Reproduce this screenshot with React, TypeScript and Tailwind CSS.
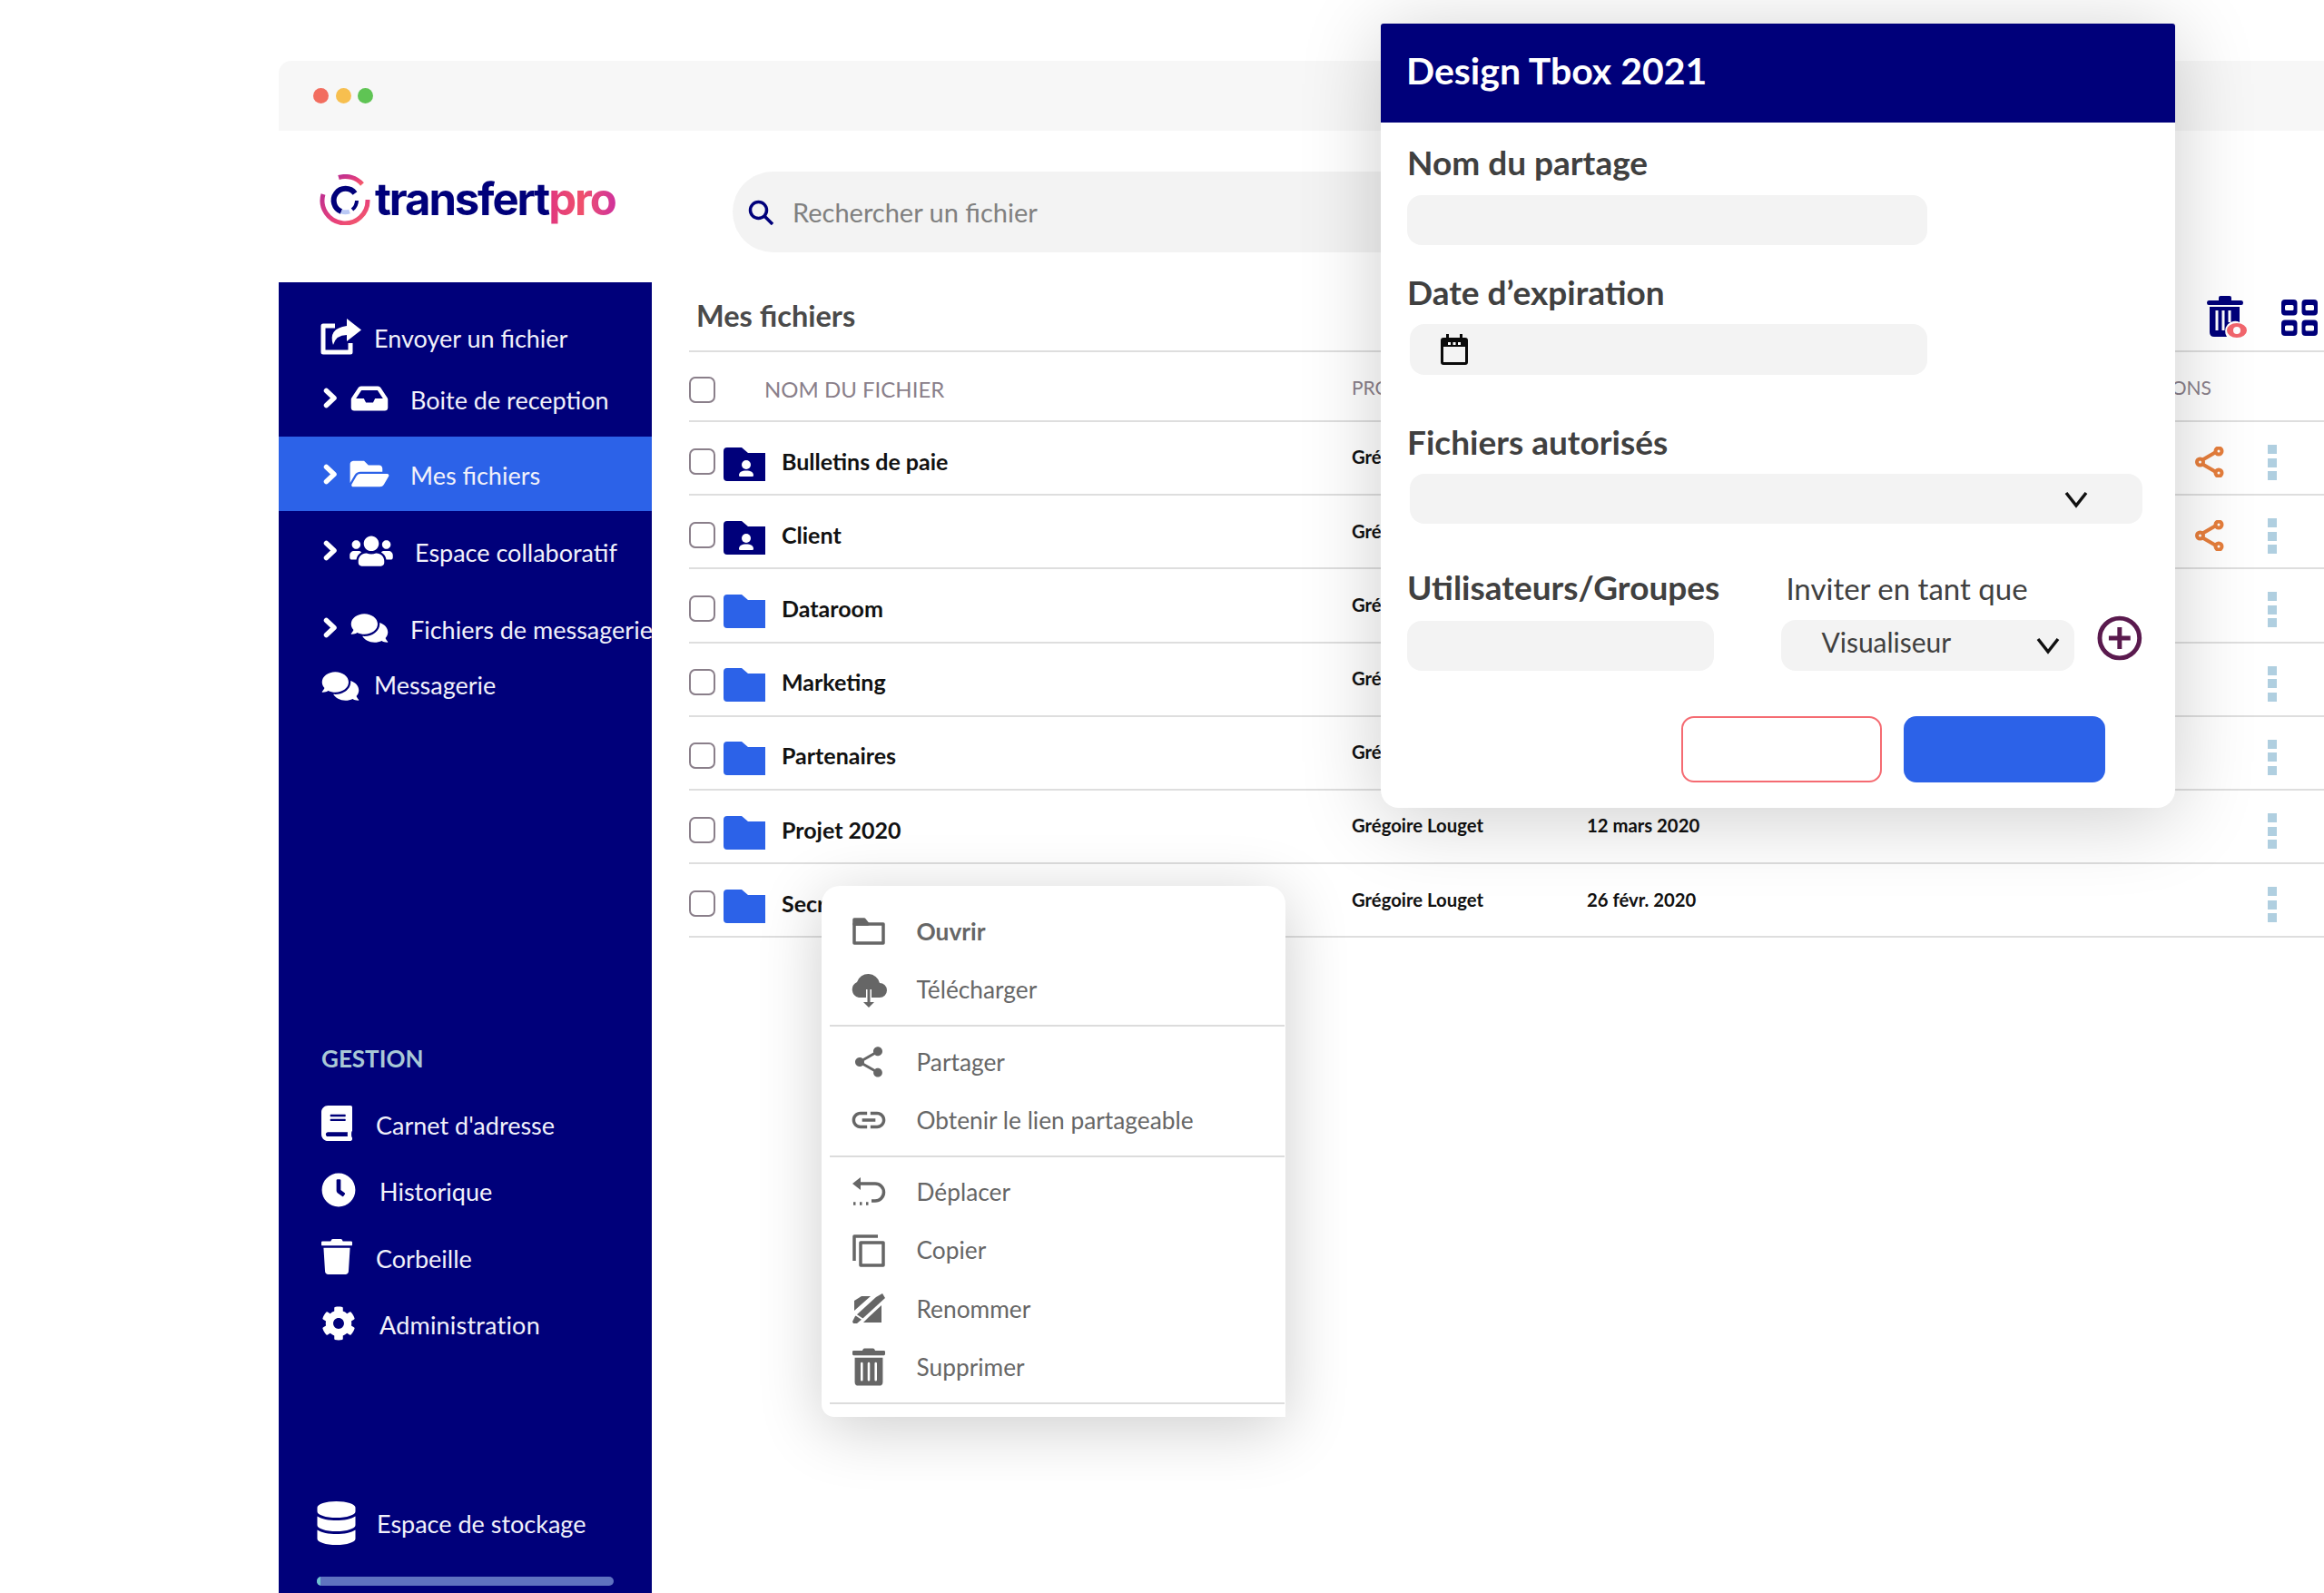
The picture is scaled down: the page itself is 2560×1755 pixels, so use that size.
import type { ReactNode } from "react";
import {
  FaBook,
  FaClock,
  FaCog,
  FaComments,
  FaDatabase,
  FaFolderOpen,
  FaInbox,
  FaTrash,
  FaTrashAlt,
  FaUsers,
} from "react-icons/fa";
import { MdLink, MdShare } from "react-icons/md";

const NAVY = "#00007a";
const BLUE = "#2c62e8";

function Logo() {
  return (
    <div className="flex items-center ml-[45px] w-[455px] mb-[16px]">
      <svg width="56" height="56" viewBox="0 0 56 56" fill="none" className="shrink-0">
        <defs>
          <linearGradient id="ring" x1="0" y1="0" x2="1" y2="1">
            <stop offset="0" stopColor="#c0308f" />
            <stop offset="0.6" stopColor="#e8407a" />
            <stop offset="1" stopColor="#f5606a" />
          </linearGradient>
        </defs>
        <path d="M21 3.5A25 25 0 0 1 47 11" stroke="url(#ring)" strokeWidth="5" />
        <path d="M53 28A25 25 0 1 1 4 22" stroke="url(#ring)" strokeWidth="5" />
        <path d="M39 21A13 13 0 1 0 24 41" stroke={NAVY} strokeWidth="6" />
        <path d="M41 29A13 13 0 0 1 36 39" stroke={NAVY} strokeWidth="4" />
        <path d="M24 41A13 13 0 0 0 33 41" stroke="#b9c8f5" strokeWidth="5" />
      </svg>
      <span className="ml-[5px] font-['Inter',sans-serif] font-bold text-[49px] leading-none tracking-[-2.1px] text-[#00007a]">
        transfert
        <span className="bg-gradient-to-r from-[#e0357f] via-[#f0506c] to-[#d0309a] bg-clip-text text-transparent">
          pro
        </span>
      </span>
    </div>
  );
}

function Chevron5() {
  return (
    <svg width="16" height="23" viewBox="0 0 16 23" fill="none" stroke="#fff" strokeWidth="5.500" strokeLinecap="round" strokeLinejoin="round" className="ml-[49px] shrink-0">
      <path d="M3.500 3.500L12 11.500L3.500 19.500" />
    </svg>
  );
}

function SendIcon() {
  return (
    <svg width="45" height="40" viewBox="0 0 45 40" fill="none" className="shrink-0">
      <path d="M16 8H3V37H33V27" stroke="#fff" strokeWidth="5" strokeLinejoin="round" />
      <path d="M29 0L45 12.500L29 25V18Q17 18 14 29Q8 11 29 8Z" fill="#fff" />
    </svg>
  );
}

type SideRowProps = {
  icon: ReactNode;
  label: string;
  height: string;
  chevron?: boolean;
  active?: boolean;
  labelClass: string;
  iconClass: string;
};

function SideRow({ icon, label, height, chevron, active, labelClass, iconClass }: SideRowProps) {
  return (
    <div className={`flex items-center overflow-hidden whitespace-nowrap ${height} ${active ? "bg-[#2c62e8]" : ""}`}>
      {chevron && <Chevron5 />}
      <span className={`shrink-0 flex items-center justify-center text-white ${iconClass}`}>{icon}</span>
      <span className={`text-[27px] leading-none text-[#f1f1fa] ${labelClass}`}>{label}</span>
    </div>
  );
}

function Sidebar() {
  return (
    <aside className="w-[411px] h-[1444px] shrink-0 bg-[#00007a] pt-[35px] overflow-hidden">
      <SideRow height="h-[50px]" icon={<SendIcon />} label="Envoyer un fichier" iconClass="ml-[46px] w-[45px]" labelClass="ml-[14px] mt-[2px]" />
      <SideRow height="h-[85px]" chevron icon={<FaInbox className="w-[44px] h-[36px]" />} label="Boite de reception" iconClass="ml-[13px] w-[44px]" labelClass="ml-[23px] mt-[4px]" />
      <SideRow height="h-[82px]" chevron active icon={<FaFolderOpen className="w-[44px] h-[38px]" />} label="Mes fichiers" iconClass="ml-[13px] w-[44px]" labelClass="ml-[23px] mt-[2px]" />
      <SideRow height="h-[87px]" chevron icon={<FaUsers className="w-[48px] h-[38px]" />} label="Espace collaboratif" iconClass="ml-[13px] w-[48px]" labelClass="ml-[24px] mt-[4px]" />
      <SideRow height="h-[83px]" chevron icon={<FaComments className="w-[44px] h-[36px]" />} label="Fichiers de messagerie" iconClass="ml-[13px] w-[44px]" labelClass="ml-[23px] mt-[4px]" />
      <SideRow height="h-[46px]" icon={<FaComments className="w-[44px] h-[36px]" />} label="Messagerie" iconClass="ml-[46px] w-[44px]" labelClass="ml-[15px] mb-[3px]" />

      <div className="mt-[367px] h-[40px] pl-[47px] flex items-center text-[26px] font-bold text-[#a9c8d6] leading-none">GESTION</div>
      <div className="mt-[15px]">
        <SideRow height="h-[73.5px]" icon={<FaBook className="w-[34px] h-[39px]" />} label="Carnet d'adresse" iconClass="ml-[47px] w-[34px]" labelClass="ml-[26px] mt-[4px]" />
        <SideRow height="h-[73.5px]" icon={<FaClock className="w-[38px] h-[38px]" />} label="Historique" iconClass="ml-[47px] w-[38px]" labelClass="ml-[26px] mt-[3px]" />
        <SideRow height="h-[73.5px]" icon={<FaTrash className="w-[34px] h-[39px]" />} label="Corbeille" iconClass="ml-[47px] w-[34px]" labelClass="ml-[26px] mt-[4px]" />
        <SideRow height="h-[73.5px]" icon={<FaCog className="w-[38px] h-[38px]" />} label="Administration" iconClass="ml-[47px] w-[38px]" labelClass="ml-[26px] mt-[3px] tracking-[0.2px]" />
      </div>
      <div className="mt-[155px]">
        <SideRow height="h-[56px]" icon={<FaDatabase className="w-[43px] h-[48px]" />} label="Espace de stockage" iconClass="ml-[42px] w-[43px]" labelClass="ml-[23px] mt-[1px]" />
      </div>
      <div className="mt-[31px] ml-[42px] w-[327px] h-[10px] rounded-full bg-[#5f72c0] overflow-hidden">
        <div className="w-[4px] h-full bg-[#6fc3d0]" />
      </div>
    </aside>
  );
}

function Folder({ shared }: { shared?: boolean }) {
  return (
    <svg width="46" height="37" viewBox="0 0 46 37" className="shrink-0">
      <path
        d="M4 0H20L27 6H46V37H4A4 4 0 0 1 0 33V4A4 4 0 0 1 4 0Z"
        fill={shared ? NAVY : BLUE}
      />
      {shared && (
        <>
          <circle cx="25" cy="19" r="5" fill="#fff" />
          <path d="M17 31C17 27 20 25.500 25 25.500S33 27 33 31Q33 32 31.500 32H18.500Q17 32 17 31Z" fill="#fff" />
        </>
      )}
    </svg>
  );
}

function Checkbox() {
  return <span className="block w-[29px] h-[29px] rounded-[7px] border-2 border-[#8a7f8a] bg-white shrink-0" />;
}

function OrangeShare() {
  return (
    <svg width="32" height="34" viewBox="0 0 32 34" fill="none" stroke="#e67e3c" strokeWidth="4" className="mt-[2px]">
      <path d="M7.500 15L23 6M7.500 19L23 28" />
      <circle cx="5.500" cy="17" r="3.500" />
      <circle cx="26" cy="5" r="3.500" />
      <circle cx="26" cy="29" r="3.500" />
    </svg>
  );
}

function Dots() {
  return (
    <div className="flex flex-col gap-[4.5px] w-[10px] mt-[3px]">
      <span className="block w-[10px] h-[10px] bg-[#b0cfe0]" />
      <span className="block w-[10px] h-[10px] bg-[#b0cfe0]" />
      <span className="block w-[10px] h-[10px] bg-[#b0cfe0]" />
    </div>
  );
}

function GridIcon() {
  return (
    <svg width="40" height="40" viewBox="0 0 40 40">
      <rect x="0" y="0" width="17.500" height="17.500" rx="4" fill={NAVY} />
      <rect x="22.500" y="0" width="17.500" height="17.500" rx="4" fill={NAVY} />
      <rect x="0" y="22.500" width="17.500" height="17.500" rx="4" fill={NAVY} />
      <rect x="22.500" y="22.500" width="17.500" height="17.500" rx="4" fill={NAVY} />
      <rect x="4" y="6" width="9.500" height="6" rx="1.500" fill="#fff" />
      <rect x="26.500" y="6" width="9.500" height="6" rx="1.500" fill="#fff" />
      <rect x="4" y="28.500" width="9.500" height="6" rx="1.500" fill="#fff" />
      <rect x="26.500" y="28.500" width="9.500" height="6" rx="1.500" fill="#fff" />
    </svg>
  );
}

const files = [
  { name: "Bulletins de paie", date: "", shared: true },
  { name: "Client", date: "", shared: true },
  { name: "Dataroom", date: "" },
  { name: "Marketing", date: "" },
  { name: "Partenaires", date: "" },
  { name: "Projet 2020", date: "12 mars 2020" },
  { name: "Secret", date: "26 févr. 2020" },
];

function FileTable() {
  return (
    <main className="flex-1 pl-[41px] min-w-0">
      <div className="h-[77px] border-b-2 border-[#dedede] flex items-center relative">
        <h2 className="ml-[8px] text-[32.5px] font-bold text-[#4a4a4a] leading-none">Mes fichiers</h2>
        <div className="ml-auto flex items-center mr-[7px] mt-[3px]">
          <svg width="46" height="50" viewBox="0 0 46 50" className="mr-[37px]">
            <path d="M14 6V3Q14 1 16 1H26Q28 1 28 3V6H39Q41 6 41 8.500Q41 11 39 11H3Q1 11 1 8.500Q1 6 3 6Z" fill={NAVY} />
            <path d="M4 13H37V30A11 11 0 0 0 23 46H9Q4 46 4 41Z" fill={NAVY} />
            <path d="M12 17V39M19 17V39M26 17V30" stroke="#fff" strokeWidth="3" />
            <ellipse cx="34" cy="39" rx="11" ry="8" fill="#f2666d" />
            <circle cx="34" cy="39" r="4" fill="#fff" />
          </svg>
          <GridIcon />
        </div>
      </div>
      <div className="h-[77px] pt-[7px] border-b-2 border-[#dedede] flex items-center text-[#8a7f8a]">
        <Checkbox />
        <span className="ml-[54px] w-[647px] text-[24px] leading-none">NOM DU FICHIER</span>
        <span className="text-[21px] leading-none mb-[5px]">PROPRIÉTAIRE</span>
        <span className="ml-auto mr-[124px] text-[21px] leading-none mb-[5px]">ACTIONS</span>
      </div>
      {files.map((file) => (
        <div key={file.name} className="h-[81.2px] pt-[7px] border-b-2 border-[#dedede] flex items-center">
          <Checkbox />
          <span className="ml-[9px] mr-[18px] mt-[6px] flex">
            <Folder shared={file.shared} />
          </span>
          <span className="w-[628px] text-[25px] font-bold text-[#111] leading-none">{file.name}</span>
          <span className="w-[259px] text-[20.3px] font-bold text-[#111] leading-none mb-[9px]">Grégoire Louget</span>
          <span className="flex-1 text-[20.3px] font-bold text-[#111] leading-none mb-[9px]">{file.date}</span>
          {file.shared && <OrangeShare />}
          <span className={`mr-[52px] ${file.shared ? "ml-[48px]" : ""}`}>
            <Dots />
          </span>
        </div>
      ))}
    </main>
  );
}

function OpenFolderIcon() {
  return (
    <svg width="36" height="30" viewBox="0 0 36 30" fill="none" stroke="#666" strokeWidth="3.500" strokeLinejoin="round">
      <path d="M2 7H34V28H2Z" />
      <path d="M2 7V2H13L17 7Z" fill="#666" />
    </svg>
  );
}

function CopyIcon() {
  return (
    <svg width="36" height="36" viewBox="0 0 36 36" fill="none" stroke="#666" strokeWidth="3.500" strokeLinejoin="round">
      <path d="M2 29V2H28" />
      <path d="M9 9H34V34H9Z" />
    </svg>
  );
}

function CloudDownload() {
  return (
    <svg width="42" height="38" viewBox="0 0 42 38" className="mt-[3px]">
      <path d="M10 26A9 9 0 0 1 8 9 A13 13 0 0 1 33 10 A8 8 0 0 1 33 26H24V17H18V26Z" fill="#666" />
      <path d="M21 15V33" stroke="#666" strokeWidth="3" />
      <path d="M15 31H27L21 37Z" fill="#666" />
    </svg>
  );
}

function MoveIcon() {
  return (
    <svg width="38" height="34" viewBox="0 0 38 34" fill="none" stroke="#666" strokeWidth="3.500">
      <path d="M10 8H26A9.500 9.500 0 0 1 26 27H22" />
      <path d="M10 1L1 8L10 15Z" fill="#666" stroke="none" />
      <path d="M2 30H5M9 30H12M16 30H19" strokeDasharray="2.5 3" />
    </svg>
  );
}

function RenameIcon() {
  return (
    <svg width="36" height="34" viewBox="0 0 36 34" fill="#666">
      <path d="M0 31L3 25L26 4L33 0L36 5L12 27L5 33H1Z" />
      <path d="M2 8L10 3L20 3L2 19Z" />
      <path d="M18 26L32 13V32H12Z" />
      <path d="M3 23L12 29" stroke="#fff" strokeWidth="2" />
    </svg>
  );
}

const menuGroups: { label: string; bold?: boolean; icon: ReactNode }[][] = [
  [
    { label: "Ouvrir", bold: true, icon: <OpenFolderIcon /> },
    { label: "Télécharger", icon: <CloudDownload /> },
  ],
  [
    { label: "Partager", icon: <MdShare className="w-[40px] h-[40px] text-[#666]" /> },
    { label: "Obtenir le lien partageable", icon: <MdLink className="w-[44px] h-[44px] text-[#666]" /> },
  ],
  [
    { label: "Déplacer", icon: <MoveIcon /> },
    { label: "Copier", icon: <CopyIcon /> },
    { label: "Renommer", icon: <RenameIcon /> },
    { label: "Supprimer", icon: <FaTrashAlt className="w-[36px] h-[42px] text-[#666]" /> },
  ],
];

function ContextMenu() {
  return (
    <div className="absolute left-[905px] top-[976px] w-[511px] h-[585px] bg-white rounded-t-[20px] rounded-bl-[14px] pt-[18px] shadow-[0_12px_70px_rgba(0,0,0,0.2)]">
      {menuGroups.map((group, i) => (
        <div key={i}>
          {group.map((item) => (
            <div key={item.label} className="h-[64.3px] flex items-center">
              <span className="ml-[27px] w-[50px] flex justify-center items-center">{item.icon}</span>
              <span className={`ml-[27.5px] text-[26.3px] leading-none text-[#666] ${item.bold ? "font-bold" : ""}`}>
                {item.label}
              </span>
            </div>
          ))}
          <div className="my-[6.5px] ml-[9px] w-[501px] h-[2px] bg-[#dcdcdc]" />
        </div>
      ))}
    </div>
  );
}

function Chevron() {
  return (
    <svg width="26" height="20" viewBox="0 0 26 20" fill="none" stroke="#111" strokeWidth="3.500">
      <path d="M2 3L13 17L24 3" />
    </svg>
  );
}

function Label({ children }: { children: ReactNode }) {
  return <div className="text-[37px] font-bold text-[#404040] leading-none">{children}</div>;
}

function ShareModal() {
  return (
    <div className="absolute left-[1521px] top-[26px] w-[875px] h-[864px] bg-white rounded-t-[3px] rounded-b-[20px] shadow-[0_10px_90px_rgba(0,0,0,0.2)]">
      <div className="h-[109px] bg-[#00007a] rounded-t-[3px] pl-[28px] pb-[6px] flex items-center">
        <h2 className="text-[41px] font-bold text-white leading-none">Design Tbox 2021</h2>
      </div>
      <div className="pl-[29px] pr-[36px] pt-[25px]">
        <Label>Nom du partage</Label>
        <div className="mt-[18px] w-[573px] h-[55px] rounded-[16px] bg-[#f3f3f3]" />
        <div className="mt-[33px]">
          <Label>Date d’expiration</Label>
        </div>
        <div className="mt-[17px] ml-[3px] w-[570px] h-[56px] rounded-[16px] bg-[#f3f3f3] flex items-center pl-[34px]">
          <svg width="30" height="34" viewBox="0 0 30 34" fill="#0a0a0a">
            <path d="M6 0H9V4H21V0H24V4H27Q30 4 30 7V31Q30 34 27 34H3Q0 34 0 31V7Q0 4 3 4H6ZM3 14V31H27V14Z" fillRule="evenodd" />
            <path d="M8 9H11V12H8ZM13.500 9H16.500V12H13.500ZM19 9H22V12H19Z" fill="#fff" />
          </svg>
        </div>
        <div className="mt-[55px]">
          <Label>Fichiers autorisés</Label>
        </div>
        <div className="mt-[17px] ml-[3px] w-[807px] h-[55px] rounded-[16px] bg-[#f3f3f3] flex items-center justify-end pr-[60px]">
          <Chevron />
        </div>
        <div className="mt-[51px] flex">
          <div className="w-[415px]">
            <Label>Utilisateurs/Groupes</Label>
            <div className="mt-[19px] w-[338px] h-[55px] rounded-[16px] bg-[#f3f3f3]" />
          </div>
          <div className="w-[325px]">
            <div className="ml-[5px] mt-[4px] text-[33px] text-[#404040] leading-none">Inviter en tant que</div>
            <div className="mt-[17.5px] h-[56px] rounded-[16px] bg-[#f3f3f3] flex items-center justify-between pl-[44px] pr-[16px]">
              <span className="text-[30px] text-[#404040] leading-none mb-[7px]">Visualiseur</span>
              <Chevron />
            </div>
          </div>
          <svg width="50" height="50" viewBox="0 0 50 50" fill="none" stroke="#5a1a4e" className="ml-[25px] mt-[50px]">
            <circle cx="25" cy="25" r="22" strokeWidth="5" />
            <path d="M25 13V37M13 25H37" strokeWidth="5" />
          </svg>
        </div>
        <div className="mt-[50px] ml-[302px] flex gap-[24px]">
          <button className="w-[221px] h-[73px] rounded-[14px] border-2 border-[#f56b72] bg-white" />
          <button className="w-[222px] h-[73px] rounded-[14px] bg-[#2c62e8]" />
        </div>
      </div>
    </div>
  );
}

export default function App() {
  return (
    <div className="relative w-[2560px] h-[1755px] overflow-hidden bg-white font-['Lato',sans-serif]">
      <div className="pl-[307px] pt-[67px]">
        <div className="h-[77px] bg-[#f7f7f7] rounded-tl-[14px] flex items-center pl-[38px] gap-[7.500px]">
          <span className="block w-[17px] h-[17px] rounded-full bg-[#f26d5f]" />
          <span className="block w-[17px] h-[17px] rounded-full bg-[#f7bf4f]" />
          <span className="block w-[17px] h-[17px] rounded-full bg-[#5fc454]" />
        </div>
        <header className="h-[167px] flex items-center">
          <Logo />
          <div className="w-[900px] h-[89px] mt-[12px] rounded-full bg-[#f3f3f3] flex items-center pl-[17px]">
            <svg width="28" height="28" viewBox="0 0 28 28" fill="none" stroke={NAVY} strokeWidth="3.500">
              <circle cx="11.500" cy="11.500" r="9" />
              <path d="M18 18L27 27" />
            </svg>
            <span className="ml-[21px] text-[29px] leading-none text-[#808080]">Rechercher un fichier</span>
          </div>
        </header>
        <div className="flex">
          <Sidebar />
          <FileTable />
        </div>
      </div>
      <ContextMenu />
      <ShareModal />
    </div>
  );
}
